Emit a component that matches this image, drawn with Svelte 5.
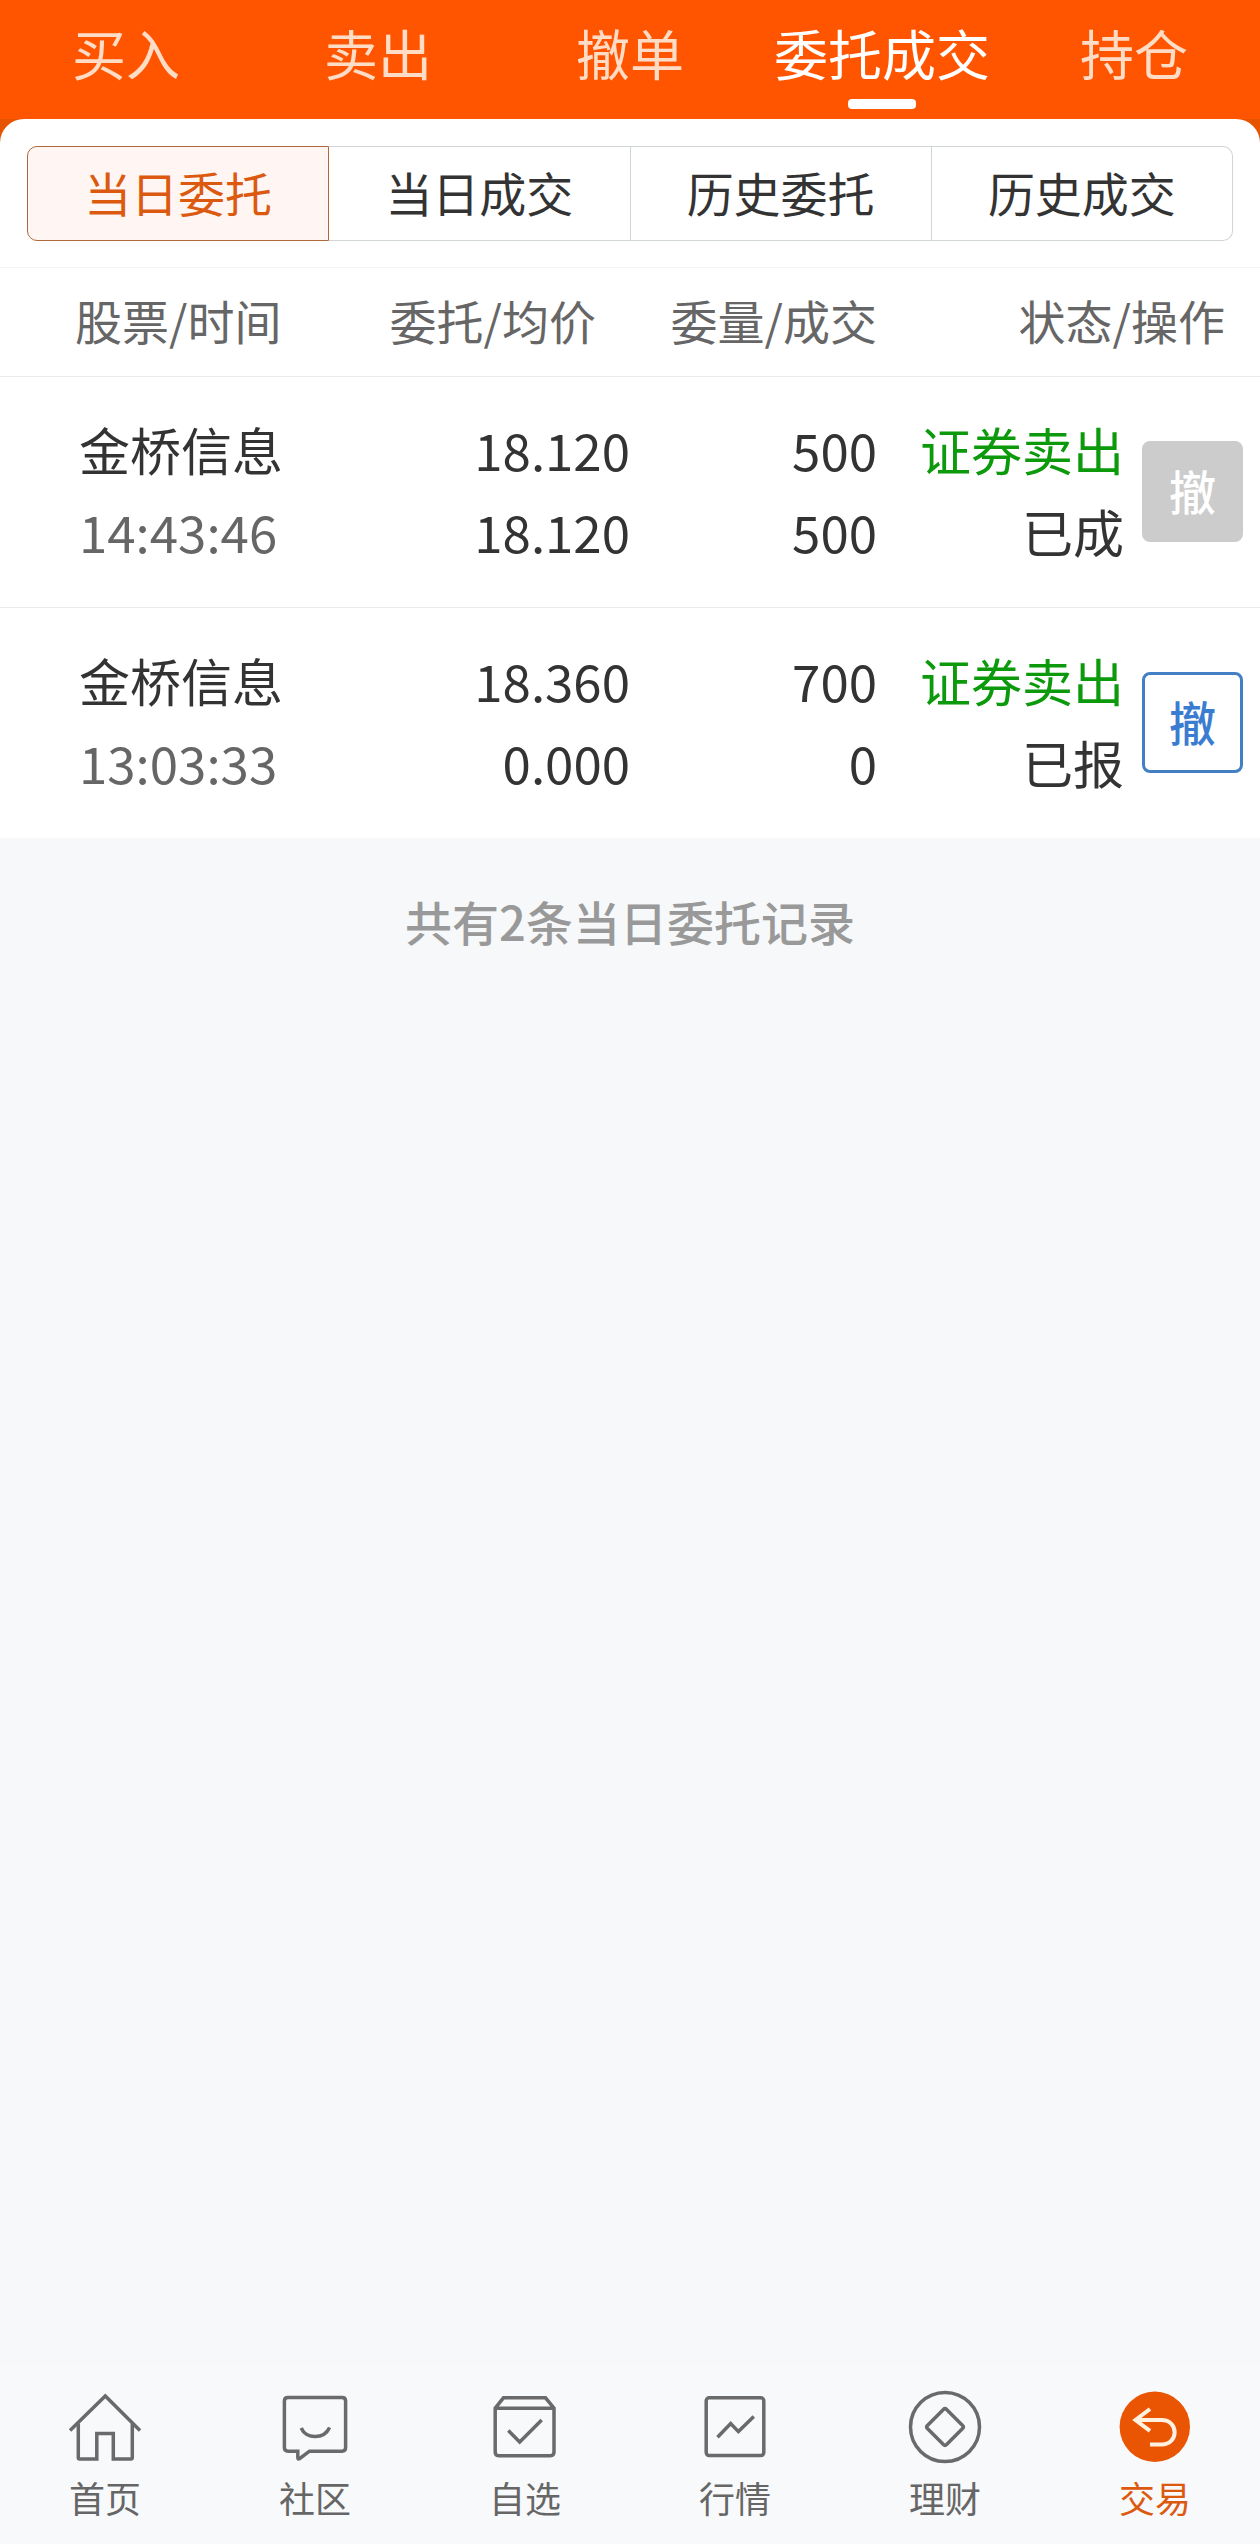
<script>
  let topTab = $state("委托成交");
  let subTab = $state("当日委托");
  let navTab = $state("交易");

  const topTabs = ["买入", "卖出", "撤单", "委托成交", "持仓"];
  const subTabs = ["当日委托", "当日成交", "历史委托", "历史成交"];
  const navItems = ["首页", "社区", "自选", "行情", "理财", "交易"];

  const orders = [
    {
      name: "金桥信息",
      time: "14:43:46",
      price: "18.120",
      avg: "18.120",
      amount: 500,
      filled: 500,
      side: "证券卖出",
      status: "已成",
      canCancel: false,
    },
    {
      name: "金桥信息",
      time: "13:03:33",
      price: "18.360",
      avg: "0.000",
      amount: 700,
      filled: 0,
      side: "证券卖出",
      status: "已报",
      canCancel: true,
    },
  ];
</script>

<div class="page">
  <header class="top">
    {#each topTabs as t}
      <button class="top-tab" class:active={t === topTab} onclick={() => (topTab = t)}>
        {t}
      </button>
    {/each}
  </header>

  <main>
    <div class="panel-wrap">
      <div class="panel">
        {#each subTabs as t}
          <button class="seg" class:active={t === subTab} onclick={() => (subTab = t)}>
            {t}
          </button>
        {/each}
      </div>
    </div>

    <table>
      <colgroup>
        <col />
        <col class="col-price" />
        <col class="col-num" />
        <col class="col-num" />
        <col class="col-action" />
      </colgroup>
      <thead>
        <tr>
          <th class="left">股票/时间</th>
          <th class="price">委托/均价</th>
          <th>委量/成交</th>
          <th class="last" colspan="2">状态/操作</th>
        </tr>
      </thead>
      <tbody>
        {#each orders as o}
          <tr>
            <td class="left">
              <div>{o.name}</div>
              <div class="time">{o.time}</div>
            </td>
            <td>
              <div>{o.price}</div>
              <div>{o.avg}</div>
            </td>
            <td>
              <div>{o.amount}</div>
              <div>{o.filled}</div>
            </td>
            <td>
              <div class="sell">{o.side}</div>
              <div>{o.status}</div>
            </td>
            <td class="action">
              <button class="cancel" disabled={!o.canCancel}>撤</button>
            </td>
          </tr>
        {/each}
      </tbody>
    </table>

    <p class="total">共有{orders.length}条当日委托记录</p>
  </main>

  <nav>
    {#each navItems as n, i}
      <button class="nav-item" class:active={n === navTab} onclick={() => (navTab = n)}>
        <svg viewBox="0 0 74 74" aria-hidden="true">
          {#if i === 0}
            <path d="M2 40.5L37.3 6L72 40.5" />
            <path d="M10.3 33.5V67.5Q10.3 69 11.8 69H28.8V43.5H45.3V69H62.8Q64.3 69 64.3 67.5V33.5" />
          {:else if i === 1}
            <path
              d="M10 7.6H64Q67.6 7.6 67.6 11V57.5Q67.6 61.2 64 61.2H31.5L21.5 68.7Q19.8 69.5 19.8 67.8V61.2H10Q6.4 61.2 6.4 57.5V11Q6.4 7.6 10 7.6Z"
            />
            <path d="M23.2 38C28 49.5 46 49.5 51.6 37.4" />
          {:else if i === 2}
            <path
              d="M7.2 18.2L15.5 7.8H57.5L66 18.2V62Q66 65.7 62.5 65.7H10.5Q7.2 65.7 7.2 62ZM7.2 18.2H66"
            />
            <path d="M20.3 40.5L31.7 52L53.7 30" />
          {:else if i === 3}
            <rect x="8.2" y="7.8" width="57.6" height="57.8" rx="3" />
            <path d="M19.5 47.3L32.7 33.6L40.4 41.6L55.8 26.5" />
          {:else if i === 4}
            <circle cx="37" cy="37" r="34.5" />
            <path
              d="M38.6 19.4L54.6 35.4Q56.2 37 54.6 38.6L38.6 54.6Q37 56.2 35.4 54.6L19.4 38.6Q17.8 37 19.4 35.4L35.4 19.4Q37 17.8 38.6 19.4Z"
            />
          {:else}
            <circle class="disc" cx="36.8" cy="36.8" r="35.2" />
            <path class="arrow" d="M32 19L17.5 30L32 40.8M17.5 30H43.5C61 30 61 54.5 43.5 54.5H32" />
          {/if}
        </svg>
        <span>{n}</span>
      </button>
    {/each}
  </nav>
</div>

<style>
  :global(body) {
    margin: 0;
    background: #f6f8fa;
  }

  .page {
    display: flex;
    flex-direction: column;
    min-height: 100vh;
    color: #333;
    font-family: "Noto Sans CJK SC", sans-serif;
  }

  button {
    margin: 0;
    padding: 0;
    border: 0;
    background: none;
    color: inherit;
    font: inherit;
    cursor: pointer;
  }

  .top {
    display: grid;
    grid-template-columns: repeat(5, 1fr);
    height: 119px;
    background: #ff5500;
  }
  .top-tab {
    display: flex;
    flex-direction: column;
    align-items: center;
    padding-top: 16px;
    color: #ffdcc6;
    font-size: 54px;
    line-height: 74px;
    white-space: nowrap;
  }
  .top-tab.active {
    color: #fff;
  }
  .top-tab.active::after {
    content: "";
    width: 68px;
    height: 10px;
    margin-top: 9px;
    border-radius: 4px;
    background: #fff;
  }

  .panel-wrap {
    background: linear-gradient(#e65400 24px, #fff 24px);
  }
  .panel {
    display: flex;
    padding: 27px 27px 26px;
    border-bottom: 1px solid #f4f4f4;
    border-radius: 24px 24px 0 0;
    background: #fff;
  }
  .seg {
    flex: 1;
    height: 95px;
    padding-bottom: 3px;
    border: 1px solid #d0d5d7;
    border-left-width: 0;
    font-size: 47px;
    line-height: 70px;
  }
  .seg:first-child {
    border-left-width: 1px;
    border-radius: 10px 0 0 10px;
  }
  .seg:last-child {
    border-radius: 0 10px 10px 0;
  }
  .seg.active {
    border-color: #b0683a;
    background: #fff6f3;
    color: #dc5a10;
  }

  table {
    width: 100%;
    border-collapse: collapse;
    table-layout: fixed;
    background: #fff;
  }
  .col-price {
    width: 280px;
  }
  .col-num {
    width: 247px;
  }
  .col-action {
    width: 136px;
  }
  th,
  td {
    box-sizing: border-box;
    padding: 0 0 4px;
    text-align: right;
    white-space: nowrap;
  }
  th {
    height: 108px;
    color: #666;
    font-size: 47px;
    font-weight: 400;
    line-height: 70px;
  }
  th.left {
    padding-left: 75px;
  }
  th.price {
    padding-right: 34px;
  }
  th.last {
    padding-right: 35px;
  }
  td {
    height: 231px;
    font-size: 51px;
    line-height: 82px;
  }
  td.left {
    padding-left: 79px;
  }
  .left {
    text-align: left;
  }
  tbody tr {
    border-top: 1px solid #ebebeb;
  }
  .time {
    color: #666;
  }
  .sell {
    color: #0c9a0c;
  }
  td.action {
    padding: 0 17px 0 0;
    vertical-align: middle;
    line-height: 0;
  }
  .cancel {
    width: 101px;
    height: 101px;
    padding-bottom: 3px;
    border: 3px solid #437fc4;
    border-radius: 8px;
    color: #3a7dd0;
    font-size: 47px;
    font-weight: 500;
    line-height: 70px;
  }
  .cancel:disabled {
    border-color: #ccc;
    background: #ccc;
    color: #fff;
    cursor: default;
  }

  .total {
    margin: 48px 0;
    color: #999;
    font-size: 47px;
    font-weight: 500;
    line-height: 70px;
    text-align: center;
  }

  nav {
    display: grid;
    grid-template-columns: repeat(6, 1fr);
    margin-top: auto;
    padding: 24px 0 26px;
    background: #f8f9fb;
  }
  .nav-item {
    display: flex;
    flex-direction: column;
    align-items: center;
    gap: 12px;
    color: #666;
    font-size: 36px;
    line-height: 42px;
  }
  .nav-item.active {
    color: #dc5a10;
  }
  svg {
    width: 74px;
    height: 74px;
    fill: none;
    stroke: #6a6a6a;
    stroke-width: 3.5;
  }
  .disc {
    fill: #ea5504;
    stroke: none;
  }
  .arrow {
    stroke: #fff0e0;
    stroke-width: 4;
  }
</style>
